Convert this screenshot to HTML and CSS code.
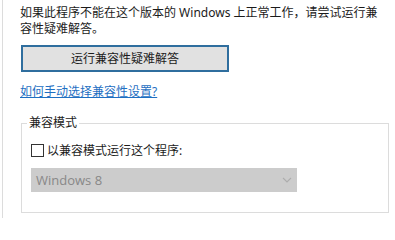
FILE: index.html
```html
<!DOCTYPE html>
<html lang="zh-CN">
<head>
<meta charset="utf-8">
<title>兼容性</title>
<link rel="stylesheet" href="styles.css">
</head>
<body>
<div class="page">
  <p class="intro">如果此程序不能在这个版本的 Windows 上正常工作，请尝试运行兼容性疑难解答。</p>
  <button class="btn" type="button">运行兼容性疑难解答</button>
  <a class="link" href="#">如何手动选择兼容性设置?</a>
  <fieldset class="group">
    <legend class="legend">兼容模式</legend>
    <label class="check-row">
      <span class="checkbox"></span>
      <span class="check-label">以兼容模式运行这个程序:</span>
    </label>
    <div class="select">
      <span class="select-text">Windows 8</span>
      <svg class="chevron" width="10" height="6" viewBox="0 0 10 6"><path d="M1 1 L5 5 L9 1" fill="none" stroke="#adadad" stroke-width="1.1"/></svg>
    </div>
  </fieldset>
</div>
</body>
</html>
```
FILE: styles.css
```css
html, body {
  margin: 0;
  padding: 0;
  background: #ffffff;
}
body {
  width: 395px;
  height: 218px;
  overflow: hidden;
  font-family: "Noto Sans", "Noto Sans CJK SC", sans-serif;
  font-size: 12px;
  color: #1b1b1b;
}
.page {
  margin-left: 2px;
  border-left: 1px solid #dcdcdc;
  padding-left: 17px;
  height: 218px;
  box-sizing: border-box;
}
.intro {
  margin: 0;
  padding-top: 5px;
  width: 366px;
  line-height: 16px;
}
.btn {
  display: block;
  margin: 8px 0 0 1px;
  width: 208px;
  height: 27px;
  box-sizing: border-box;
  border: 2px solid #2f6e9e;
  background: #e1e1e1;
  font-family: inherit;
  font-size: 12px;
  color: #1b1b1b;
  padding: 0;
  line-height: 23px;
}
.link {
  display: inline-block;
  margin-top: 12px;
  line-height: 16px;
  color: #1e6fc2;
  text-decoration: underline;
}
.group {
  display: block;
  margin: 15px 0 0 1px;
  width: 368px;
  box-sizing: border-box;
  border: 1px solid #dcdcdc;
  padding: 0 0 20px 9px;
}
.legend {
  margin-left: -4px;
  padding: 0 2px;
  line-height: 16px;
}
.check-row {
  display: flex;
  align-items: center;
  height: 16px;
  margin-top: 11px;
}
.checkbox {
  width: 13px;
  height: 13px;
  box-sizing: border-box;
  border: 1px solid #333333;
  background: #ffffff;
}
.check-label {
  margin-left: 3px;
}
.select {
  display: flex;
  align-items: center;
  justify-content: space-between;
  margin-top: 10px;
  width: 266px;
  height: 24px;
  box-sizing: border-box;
  background: #cccccc;
  padding: 0 5px 0 5px;
}
.select-text {
  font-family: "Open Sans", "Noto Sans", sans-serif;
  font-size: 13px;
  color: #888888;
}
.chevron {
  display: block;
}
```
